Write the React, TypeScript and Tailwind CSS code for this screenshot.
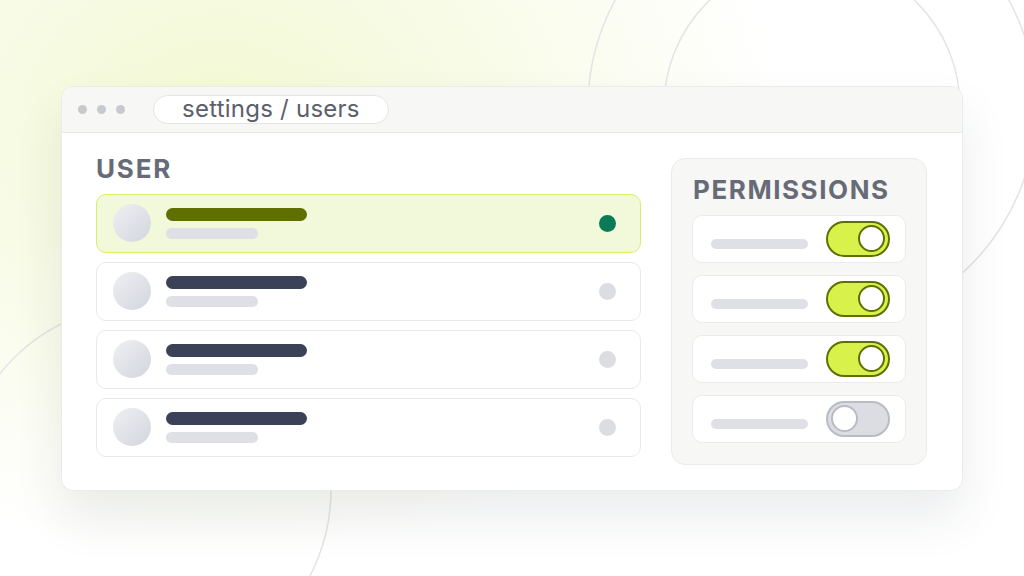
import { twMerge } from "tailwind-merge";

const users = [
  { id: 1, active: true },
  { id: 2, active: false },
  { id: 3, active: false },
  { id: 4, active: false },
];

const permissions = [true, true, true, false];

function Toggle({ on }: { on: boolean }) {
  return (
    <div
      className={twMerge(
        "flex h-[36px] w-[64px] shrink-0 items-center rounded-full border-2 px-[3px]",
        on
          ? "justify-end border-[#5f7000] bg-[#d9f24b]"
          : "justify-start border-[#b9bcc4] bg-[#dcdde2]",
      )}
    >
      <div
        className={twMerge(
          "h-[27px] w-[27px] rounded-full border-2 bg-white",
          on ? "border-[#5f7000]" : "border-[#b9bcc4]",
        )}
      />
    </div>
  );
}

function UserRow({ active }: { active: boolean }) {
  return (
    <div
      className={twMerge(
        "flex h-[59px] items-center rounded-[10px] border-[1.5px] pl-4 pr-6",
        active ? "border-[#d8ed6c] bg-[#f2f8da]" : "border-[#e9e9e9] bg-white",
      )}
    >
      <div className="h-[38px] w-[38px] shrink-0 rounded-full bg-gradient-to-br from-[#eff0f3] to-[#d2d5dd]" />
      <div className="ml-[15px] flex flex-1 flex-col gap-[7px]">
        <div
          className={twMerge(
            "h-[13px] w-[141px] rounded-full",
            active ? "bg-[#5f7000]" : "bg-[#3b4258]",
          )}
        />
        <div className="h-[11px] w-[92px] rounded-full bg-[#dfe0e5]" />
      </div>
      <div
        className={twMerge(
          "h-[17px] w-[17px] rounded-full",
          active ? "bg-[#0b7a57]" : "bg-[#dcdde2]",
        )}
      />
    </div>
  );
}

function Background() {
  return (
    <svg
      className="absolute inset-0"
      width="1024"
      height="576"
      viewBox="0 0 1024 576"
      fill="none"
    >
      <circle cx="812" cy="107" r="148" stroke="#e4e4e4" strokeWidth="1.5" />
      <circle cx="812" cy="107" r="224" stroke="#e4e4e4" strokeWidth="1.5" />
      <circle cx="145" cy="490" r="186" stroke="#e4e4e4" strokeWidth="1.5" />
    </svg>
  );
}

export default function App() {
  return (
    <div
      className="relative flex h-[576px] w-[1024px] items-center justify-center overflow-hidden bg-white bg-[radial-gradient(ellipse_560px_440px_at_220px_120px,#f3f9d4_0%,#f8fbe6_45%,rgba(255,255,255,0)_100%)]"
      style={{ fontFamily: "Inter, 'Liberation Sans', sans-serif" }}
    >
      <Background />
      <div className="relative flex h-[405px] w-[902px] flex-col overflow-hidden rounded-[12px] border border-[#ebebe8] bg-white shadow-[0_26px_50px_rgba(30,40,60,0.09)]">
        <div className="flex h-[46px] shrink-0 items-center border-b border-[#e8e8e5] bg-[#f7f7f5] pl-4">
          <div className="flex gap-[10px]">
            <span className="h-[9px] w-[9px] rounded-full bg-[#c8c9cf]" />
            <span className="h-[9px] w-[9px] rounded-full bg-[#c8c9cf]" />
            <span className="h-[9px] w-[9px] rounded-full bg-[#c8c9cf]" />
          </div>
          <div className="ml-[28px] flex h-[29px] items-center rounded-full border border-[#e4e4e4] bg-white px-[28px] text-[24px] leading-none tracking-[0.01em] text-[#5b5f6b]">
            settings / users
          </div>
        </div>

        <div className="flex flex-1 gap-[30px] pl-[34px] pr-[35px] pt-[23px]">
          <div className="flex flex-1 flex-col">
            <h2 className="text-[26px] font-bold leading-none tracking-[0.07em] text-[#676b78]">
              USER
            </h2>
            <div className="mt-[12px] flex flex-col gap-[9px]">
              {users.map((u) => (
                <UserRow key={u.id} active={u.active} />
              ))}
            </div>
          </div>

          <div className="mt-[2px] flex h-[307px] w-[256px] shrink-0 flex-col rounded-[14px] border border-[#ebebe8] bg-[#f7f7f5] px-5 pb-5 pt-[18px]">
            <h2 className="ml-[1px] text-[26px] font-bold leading-none tracking-[0.06em] text-[#676b78]">
              PERMISSIONS
            </h2>
            <div className="mt-[12px] flex flex-col gap-3">
              {permissions.map((on, i) => (
                <div
                  key={i}
                  className="flex h-[48px] items-center justify-between rounded-[10px] border border-[#ebebea] bg-white pl-[18px] pr-[15px]"
                >
                  <div className="mt-[10px] h-[10px] w-[97px] rounded-full bg-[#dfe0e5]" />
                  <Toggle on={on} />
                </div>
              ))}
            </div>
          </div>
        </div>
      </div>
    </div>
  );
}
